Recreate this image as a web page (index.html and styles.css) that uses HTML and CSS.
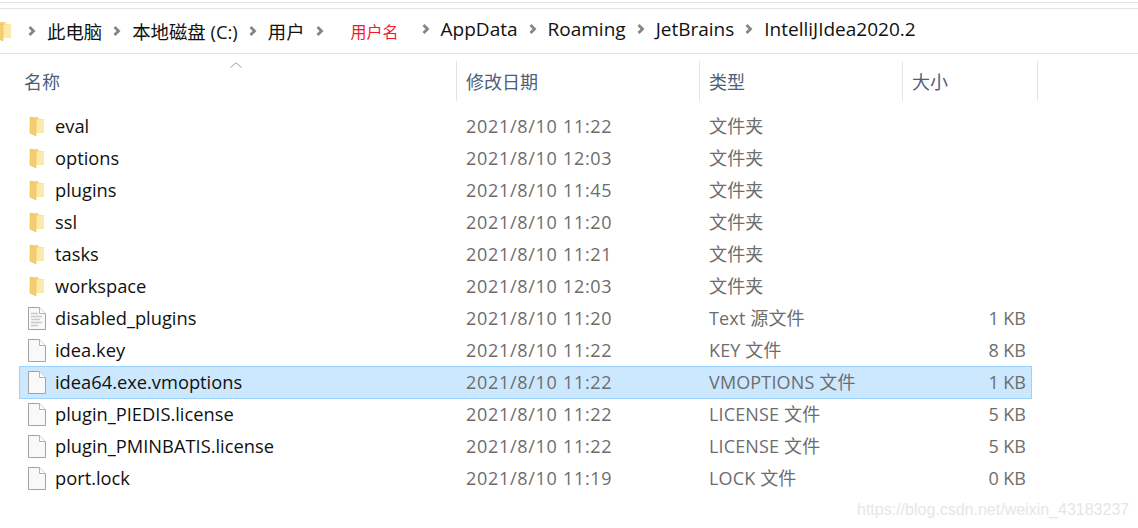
FILE: index.html
```html
<!DOCTYPE html>
<html lang="zh-CN">
<head>
  <meta charset="UTF-8">
  <meta name="viewport" content="width=device-width, initial-scale=1.0">
  <title>IntelliJIdea2020.2</title>
  <link rel="stylesheet" href="styles.css">
</head>
<body>
  <svg class="sprites" width="0" height="0" aria-hidden="true">
    <symbol id="folder" viewBox="0 0 16 21">
      <path d="M1 1h8l1 2h5v14H1z" fill="#f6d67c"/>
      <path d="M6 4l9-1v14l-9 0z" fill="#fde9a9"/>
      <path d="M1 1l6 3v16l-6-3z" fill="#f3cf6e"/>
      <path d="M1 1l6 3v16l-6-3z" fill="none" stroke="#e6bf5e" stroke-width=".6"/>
    </symbol>
    <symbol id="file" viewBox="0 0 18 23">
      <path d="M.5.5h11l6 6v16H.5z" fill="#f9f9f9" stroke="#a3a3a3"/>
      <path d="M11.5.5v6h6" fill="#fff" stroke="#b5b5b5"/>
    </symbol>
    <symbol id="textfile" viewBox="0 0 18 23">
      <path d="M.5.5h11l6 6v16H.5z" fill="#f9f9f9" stroke="#a3a3a3"/>
      <path d="M11.5.5v6h6" fill="#fff" stroke="#b5b5b5"/>
      <path d="M3 6.5h7M3 9.5h11M3 12.5h9M3 15.5h11M3 18.5h7" stroke="#c9c9c9" stroke-width="1.3"/>
    </symbol>
    <symbol id="chev" viewBox="0 0 8 10">
      <path d="M1.500 1L5.500 5l-4 4" fill="none" stroke="#858585" stroke-width="2.800"/>
    </symbol>
  </svg>

  <div class="titlebar"></div>

  <nav class="breadcrumb">
    <svg class="crumb-folder"><use href="#folder"/></svg>
    <svg class="chev"><use href="#chev"/></svg>
    <span class="crumb crumb-cjk">此电脑</span>
    <svg class="chev"><use href="#chev"/></svg>
    <span class="crumb crumb-cjk">本地磁盘 (C:)</span>
    <svg class="chev"><use href="#chev"/></svg>
    <span class="crumb crumb-cjk">用户</span>
    <svg class="chev"><use href="#chev"/></svg>
    <span class="crumb crumb-user">用户名</span>
    <svg class="chev chev-up"><use href="#chev"/></svg>
    <span class="crumb crumb-latin">AppData</span>
    <svg class="chev chev-up"><use href="#chev"/></svg>
    <span class="crumb crumb-latin">Roaming</span>
    <svg class="chev chev-up"><use href="#chev"/></svg>
    <span class="crumb crumb-latin">JetBrains</span>
    <svg class="chev chev-up"><use href="#chev"/></svg>
    <span class="crumb crumb-latin">IntelliJIdea2020.2</span>
  </nav>

  <div class="list-head">
    <div class="head-cell head-name">名称</div>
    <div class="head-cell head-date">修改日期</div>
    <div class="head-cell head-type">类型</div>
    <div class="head-cell head-size">大小</div>
    <svg class="sort-arrow" viewBox="0 0 12 6"><path d="M.5 5.500L6 .8l5.500 4.700" fill="none" stroke="#9a9a9a"/></svg>
  </div>

  <div class="file-list">
    <div class="row"><svg class="icon icon-folder"><use href="#folder"/></svg><span class="name">eval</span><span class="date">2021/8/10 11:22</span><span class="type">文件夹</span><span class="size"></span></div>
    <div class="row"><svg class="icon icon-folder"><use href="#folder"/></svg><span class="name">options</span><span class="date">2021/8/10 12:03</span><span class="type">文件夹</span><span class="size"></span></div>
    <div class="row"><svg class="icon icon-folder"><use href="#folder"/></svg><span class="name">plugins</span><span class="date">2021/8/10 11:45</span><span class="type">文件夹</span><span class="size"></span></div>
    <div class="row"><svg class="icon icon-folder"><use href="#folder"/></svg><span class="name">ssl</span><span class="date">2021/8/10 11:20</span><span class="type">文件夹</span><span class="size"></span></div>
    <div class="row"><svg class="icon icon-folder"><use href="#folder"/></svg><span class="name">tasks</span><span class="date">2021/8/10 11:21</span><span class="type">文件夹</span><span class="size"></span></div>
    <div class="row"><svg class="icon icon-folder"><use href="#folder"/></svg><span class="name">workspace</span><span class="date">2021/8/10 12:03</span><span class="type">文件夹</span><span class="size"></span></div>
    <div class="row"><svg class="icon"><use href="#textfile"/></svg><span class="name">disabled_plugins</span><span class="date">2021/8/10 11:20</span><span class="type">Text 源文件</span><span class="size">1 KB</span></div>
    <div class="row"><svg class="icon"><use href="#file"/></svg><span class="name">idea.key</span><span class="date">2021/8/10 11:22</span><span class="type">KEY 文件</span><span class="size">8 KB</span></div>
    <div class="row selected"><svg class="icon"><use href="#file"/></svg><span class="name">idea64.exe.vmoptions</span><span class="date">2021/8/10 11:22</span><span class="type">VMOPTIONS 文件</span><span class="size">1 KB</span></div>
    <div class="row"><svg class="icon"><use href="#file"/></svg><span class="name">plugin_PIEDIS.license</span><span class="date">2021/8/10 11:22</span><span class="type">LICENSE 文件</span><span class="size">5 KB</span></div>
    <div class="row"><svg class="icon"><use href="#file"/></svg><span class="name">plugin_PMINBATIS.license</span><span class="date">2021/8/10 11:22</span><span class="type">LICENSE 文件</span><span class="size">5 KB</span></div>
    <div class="row"><svg class="icon"><use href="#file"/></svg><span class="name">port.lock</span><span class="date">2021/8/10 11:19</span><span class="type">LOCK 文件</span><span class="size">0 KB</span></div>
  </div>

  <div class="watermark">https://blog.csdn.net/weixin_43183237</div>
</body>
</html>
```

FILE: styles.css
```css
body {
  font-family: "Open Sans", "Noto Sans CJK SC", sans-serif;
  font-size: 18px;
  margin: 0;
  padding: 0;
  background-color: #fff;
  color: #111;
  height: 528px;
  overflow: hidden;
  position: relative;
}

.sprites {
  display: block;
}

.titlebar {
  box-sizing: border-box;
  height: 7px;
  margin-top: 2px;
  border-top: 1px solid #e3e3e3;
  border-bottom: 1px solid #e3e3e3;
}

.breadcrumb {
  display: flex;
  align-items: center;
  box-sizing: border-box;
  height: 45px;
  border-bottom: 1px solid #dfdfdf;
}

.crumb {
  white-space: nowrap;
  margin: 0 11px;
}

.crumb-cjk {
  font-size: 18.4px;
  margin-bottom: 1px;
}

.crumb-latin {
  font-size: 19px;
  margin-bottom: 5px;
}

.crumb-user {
  color: #f01a2a;
  font-size: 16px;
  margin: 0 23px 0 27px;
}

.crumb-folder {
  width: 16px;
  height: 21px;
  margin-left: -4px;
  margin-right: 16px;
  flex: none;
}

.chev {
  width: 8px;
  height: 10px;
  flex: none;
}

.chev-up {
  margin-bottom: 4px;
}

.list-head {
  display: flex;
  height: 40px;
  margin-top: 7px;
  color: #4c607a;
  font-size: 18px;
  position: relative;
}

.head-cell {
  box-sizing: border-box;
  line-height: 42px;
  border-right: 1px solid #e5e5e5;
  padding-left: 9px;
  flex: none;
}

.head-name {
  width: 457px;
  padding-left: 24px;
}

.head-date {
  width: 243px;
}

.head-type {
  width: 203px;
}

.head-size {
  width: 135px;
}

.sort-arrow {
  position: absolute;
  left: 230px;
  top: 1px;
  width: 12px;
  height: 6px;
}

.file-list {
  margin: 9px 0 0 19px;
  width: 1013px;
}

.row {
  box-sizing: border-box;
  display: grid;
  grid-template-columns: 27px 411px 243px 193px 1fr;
  align-items: center;
  height: 32px;
  padding: 0 5px 0 8px;
  border: 1px solid transparent;
  white-space: nowrap;
}

.row.selected {
  height: 33px;
  padding-bottom: 1px;
  margin-bottom: -1px;
  background-color: #cce8ff;
  border-color: #99d1ff;
}

.icon {
  width: 18px;
  height: 23px;
}

.icon-folder {
  width: 16px;
  height: 21px;
  margin-left: 1px;
}

.name {
  color: #111;
  font-size: 18.3px;
  margin-bottom: 2px;
}

.date,
.type,
.size {
  color: #6d6d6d;
}

.date {
  letter-spacing: 0.7px;
}

.type {
  letter-spacing: 0.15px;
  margin-bottom: 2px;
}

.size {
  text-align: right;
}

.watermark {
  position: absolute;
  left: 857px;
  top: 501px;
  font-family: "Liberation Sans", sans-serif;
  font-size: 16px;
  color: #e6e6e6;
  white-space: nowrap;
}
```
